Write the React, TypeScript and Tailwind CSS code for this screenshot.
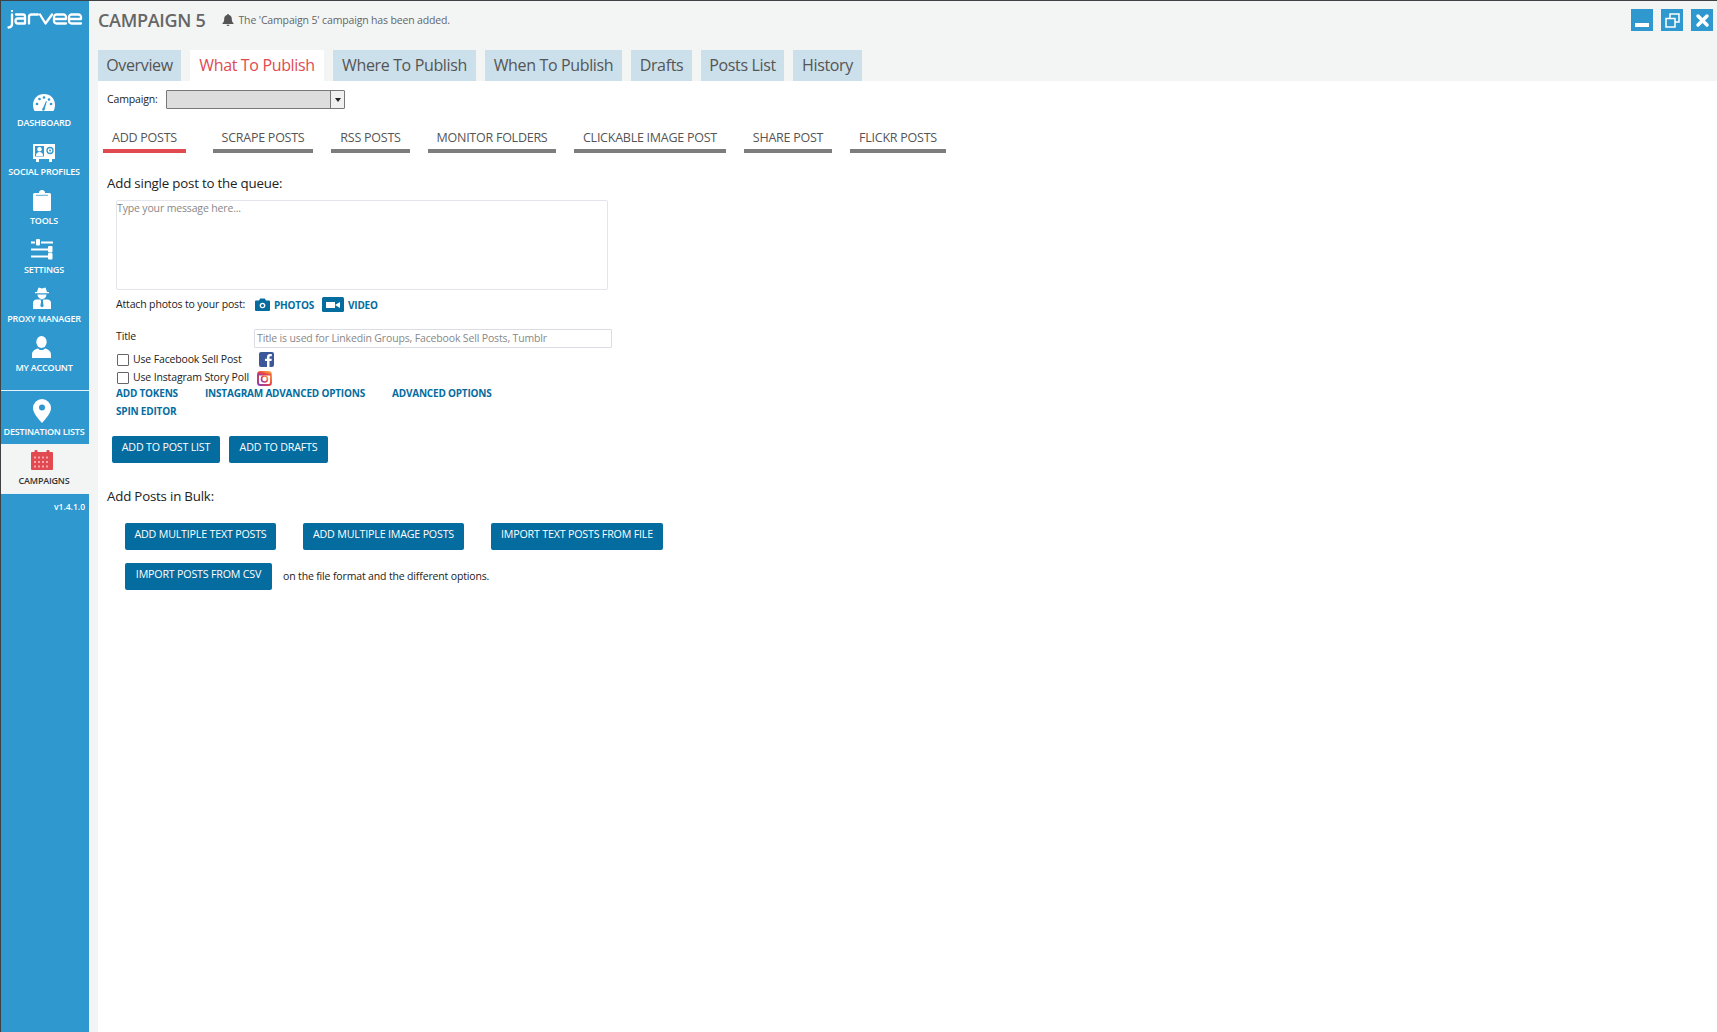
import React from "react";

const font = "font-['Open_Sans','Noto_Sans',sans-serif]";

const E = ({ x }: { x: number }) => (
  <path transform={`translate(${x} 0)`} d="M1 9h12V7a2.500 2.500 0 0 0-2.500-2.500h-7A2.500 2.500 0 0 0 1 7v4a2.500 2.500 0 0 0 2.500 2.500H13" />
);

const Logo = () => (
  <svg width="76" height="19" viewBox="0 0 76 19" fill="none" stroke="white" strokeWidth="2.300" strokeLinecap="round" strokeLinejoin="round">
    <path d="M5 4.500V14c0 2-1 3.300-3.500 3.500" />
    <circle cx="5" cy="0.900" r="0.500" fill="white" strokeWidth="1.200" />
    <path d="M9 4.500h7a2 2 0 0 1 2 2v7h-7a2.500 2.500 0 0 1 0-5h7" />
    <path d="M22 13.500V7a2.500 2.500 0 0 1 2.500-2.500H31" />
    <path d="M33 4.500l5.500 9 6.500-9" />
    <E x={46} />
    <E x={61} />
  </svg>
);

const icons: Record<string, React.ReactNode> = {
  dash: (
    <svg width="24" height="20" viewBox="0 0 24 20" fill="white">
      <path d="M12 1C5.500 1 1 5.800 1 12c0 2.200.6 4.300 1.600 6h18.800c1-1.700 1.600-3.800 1.600-6C23 5.800 18.500 1 12 1z" />
      <g fill="#2f98cf">
        <circle cx="5" cy="11" r="1.300" /><circle cx="7.500" cy="6" r="1.300" /><circle cx="12" cy="4.500" r="1.300" /><circle cx="17" cy="6.500" r="1.300" /><circle cx="19" cy="11" r="1.300" />
        <path d="M11 15l3-7 .8.300-2 7.500a1.400 1.400 0 1 1-1.800-.8z" />
      </g>
    </svg>
  ),
  social: (
    <svg width="24" height="18" viewBox="0 0 24 18" fill="white">
      <path d="M1 0h22v15H1zM4 15h3v3H4zM17 15h3v3h-3z" />
      <rect x="3" y="2" width="9" height="10.500" fill="#2f98cf" />
      <circle cx="7.500" cy="5.200" r="2.200" />
      <path d="M4 12c0-3 1.500-4 3.500-4s3.500 1 3.500 4z" />
      <circle cx="18" cy="6.500" r="3" fill="none" stroke="#2f98cf" strokeWidth="1.300" />
      <circle cx="18" cy="6.500" r="1" fill="#2f98cf" />
    </svg>
  ),
  tools: (
    <svg width="18" height="21" viewBox="0 0 18 21" fill="white">
      <path d="M1.500 3h4.500V1.800L8 0h2l2 1.800V3h4.500A1.500 1.500 0 0 1 18 4.500v15a1.500 1.500 0 0 1-1.500 1.500h-15A1.500 1.500 0 0 1 0 19.500v-15A1.500 1.500 0 0 1 1.500 3z" />
      <path d="M3 5.300h12" stroke="#2f98cf" strokeWidth="0.800" />
    </svg>
  ),
  settings: (
    <svg width="22" height="21" viewBox="0 0 22 21" fill="white">
      <rect x="0" y="2.500" width="4" height="2" /><rect x="5" y="0" width="4" height="6.500" rx="1" /><rect x="10" y="2.500" width="12" height="2" />
      <rect x="0" y="9.500" width="17" height="2" /><rect x="17" y="7" width="4.500" height="6.500" rx="1" />
      <rect x="0" y="16.500" width="17" height="2" /><rect x="17" y="14" width="4.500" height="6.500" rx="1" />
    </svg>
  ),
  proxy: (
    <svg width="18" height="22" viewBox="0 0 18 22" fill="white">
      <path d="M4 5l1.500-4.500L9 1.500l3.500-1L14 5h2v1.300H2V5z" />
      <path d="M4.500 7.500h9a4.500 4.500 0 0 1-9 0z" />
      <path d="M3.500 12.500h11c2 0 3.500 1.500 3.500 3.500v6H0v-6c0-2 1.500-3.500 3.500-3.500z" />
      <path d="M7.500 12.500h3l-.6 2 .8 4.500L9 20.500 7.300 19l.8-4.500z" fill="#2f98cf" />
    </svg>
  ),
  account: (
    <svg width="19" height="22" viewBox="0 0 19 22" fill="white">
      <ellipse cx="9.500" cy="6" rx="5.200" ry="6" />
      <path d="M0 22v-3.500c0-3.500 3-5.500 6-6 1 1 2.200 1.500 3.500 1.500s2.500-.5 3.500-1.500c3 .5 6 2.500 6 6V22z" />
    </svg>
  ),
  pin: (
    <svg width="18" height="24" viewBox="0 0 18 24" fill="white">
      <path d="M9 0a9 9 0 0 1 9 9c0 5-5 10.500-9 15-4-4.500-9-10-9-15a9 9 0 0 1 9-9z" />
      <circle cx="9" cy="8.500" r="3" fill="#2f98cf" />
    </svg>
  ),
  cal: (
    <svg width="22" height="20" viewBox="0 0 22 20" fill="#e04a50">
      <rect x="0" y="2" width="22" height="18" rx="1" />
      <rect x="3.500" y="0" width="3" height="4" rx="1" /><rect x="15.500" y="0" width="3" height="4" rx="1" />
      <g fill="#f3a5a8">
        <rect x="3" y="6.500" width="2" height="2" /><rect x="7" y="6.500" width="2" height="2" /><rect x="11" y="6.500" width="2" height="2" /><rect x="15" y="6.500" width="2" height="2" />
        <rect x="3" y="11" width="2" height="2" /><rect x="7" y="11" width="2" height="2" /><rect x="11" y="11" width="2" height="2" /><rect x="15" y="11" width="2" height="2" />
        <rect x="3" y="15.500" width="2" height="2" /><rect x="7" y="15.500" width="2" height="2" /><rect x="11" y="15.500" width="2" height="2" /><rect x="15" y="15.500" width="2" height="2" />
      </g>
    </svg>
  ),
};

const NavItem = ({ icon, label, pl = "" }: { icon: string; label: string; pl?: string }) => (
  <div className="h-[49px] pr-[2px] flex flex-col items-center justify-end">
    <div className={`h-[26px] flex items-end ${pl}`}>{icons[icon]}</div>
    <div className="mt-[3px] h-[13px] leading-[13px] text-[9px] font-semibold text-white whitespace-nowrap tracking-[-0.2px]">{label}</div>
  </div>
);

const tabs: [string, string][] = [
  ["Overview", "w-[83px]"],
  ["What To Publish", "w-[134px]"],
  ["Where To Publish", "w-[143px]"],
  ["When To Publish", "w-[137px]"],
  ["Drafts", "w-[61px]"],
  ["Posts List", "w-[83px]"],
  ["History", "w-[69px]"],
];

const subTabs: [string, string, string][] = [
  ["ADD POSTS", "w-[83px]", "mr-[9px]"],
  ["SCRAPE POSTS", "w-[100px]", ""],
  ["RSS POSTS", "w-[79px]", ""],
  ["MONITOR FOLDERS", "w-[128px]", ""],
  ["CLICKABLE IMAGE POST", "w-[152px]", ""],
  ["SHARE POST", "w-[88px]", ""],
  ["FLICKR POSTS", "w-[96px]", ""],
];

const Btn = ({ children, w }: { children: React.ReactNode; w: string }) => (
  <button className={`${w} h-[27px] pb-[4px] bg-[#056c9f] rounded-[2px] text-white text-[10.700px] tracking-[-0.2px] whitespace-nowrap`}>{children}</button>
);

const LinkText = ({ children }: { children: React.ReactNode }) => (
  <span className="block leading-[14px] text-[#056c9f] text-[10px] font-bold whitespace-nowrap tracking-[-0.2px]">{children}</span>
);

const Check = () => <span className="w-[12px] h-[12px] border border-[#666] rounded-[1px] bg-white shrink-0" />;

export default function App() {
  return (
    <div className={`${font} w-[1717px] h-[1032px] flex flex-col overflow-hidden bg-white text-[#222] border-t border-[#3f4244]`}>
      <div className="flex-1 flex min-h-0">
        <aside className="w-[89px] shrink-0 bg-[#2f98cf] border-l border-[#3f4244] flex flex-col">
          <div className="h-[37px] pl-[6px] pt-[9px]"><Logo /></div>
          <div className="pt-[42px]">
            <NavItem icon="dash" label="DASHBOARD" />
            <NavItem icon="social" label="SOCIAL PROFILES" />
            <NavItem icon="tools" label="TOOLS" pl="pr-[5px]" />
            <NavItem icon="settings" label="SETTINGS" pl="pr-[5px]" />
            <NavItem icon="proxy" label="PROXY MANAGER" pl="pr-[5px]" />
            <NavItem icon="account" label="MY ACCOUNT" pl="pr-[5px]" />
          </div>
          <div className="h-[17px] border-b border-[#e8f3f9]" />
          <div className="h-[53px] pr-[2px] flex flex-col items-center justify-end pb-[6px]">
            <div className="pr-[5px]">{icons.pin}</div>
            <div className="mt-[2px] h-[13px] leading-[13px] text-[9px] font-semibold text-white whitespace-nowrap tracking-[-0.2px]">DESTINATION LISTS</div>
          </div>
          <div className="h-[50px] pr-[2px] bg-[#f3f5f5] flex flex-col items-center justify-end pb-[6px] border-b border-[#e8f3f9]">
            <div className="pr-[5px]">{icons.cal}</div>
            <div className="mt-[4px] h-[13px] leading-[13px] text-[9px] font-semibold text-[#333] whitespace-nowrap tracking-[-0.2px]">CAMPAIGNS</div>
          </div>
          <div className="pt-[6px] pr-[4px] text-right text-[8.500px] font-semibold leading-[13px] text-white">v1.4.1.0</div>
        </aside>

        <div className="flex-1 flex flex-col min-w-0 bg-[#f3f5f5]">
          <header className="h-[80px] shrink-0 flex flex-col">
            <div className="h-[49px] flex pl-[9px] pr-[4px]">
              <div className="flex items-start pt-[7px]">
                <span className="text-[18px] leading-[24px] text-[#666] font-semibold whitespace-nowrap tracking-[-0.3px]">CAMPAIGN 5</span>
                <span className="ml-[17px] mt-[5px] flex items-center gap-[4px]">
                  <svg width="12" height="12" viewBox="0 0 12 12" fill="#555"><path d="M6 0a1 1 0 0 1 1 1c2 .5 2.800 2 2.800 4 0 2.500.7 3.300 1.700 4.300v.7H.5v-.7C1.500 8.300 2.200 7.500 2.200 5c0-2 .8-3.500 2.800-4a1 1 0 0 1 1-1zM4.500 10.700h3a1.500 1.300 0 0 1-3 0z" /></svg>
                  <span className="text-[10.500px] leading-[14px] text-[#666] whitespace-nowrap tracking-[-0.15px]">The 'Campaign 5' campaign has been added.</span>
                </span>
              </div>
              <div className="ml-auto flex gap-[8px] pt-[8px]">
                <span className="w-[22px] h-[22px] bg-[#2f98cf] flex items-end justify-center pb-[4px]"><span className="w-[14px] h-[4px] bg-white" /></span>
                <span className="w-[22px] h-[22px] bg-[#2f98cf] flex items-center justify-center">
                  <svg width="15" height="15" viewBox="0 0 15 15" fill="none" stroke="white" strokeWidth="1.500"><rect x="5" y="1" width="9" height="8" /><rect x="1" y="5.500" width="9" height="8.500" fill="#2f98cf" /></svg>
                </span>
                <span className="w-[22px] h-[22px] bg-[#2f98cf] flex items-center justify-center">
                  <svg width="15" height="15" viewBox="0 0 15 15" stroke="white" strokeWidth="3.500" strokeLinecap="round"><path d="M3 3l9 9M12 3l-9 9" /></svg>
                </span>
              </div>
            </div>
            <nav className="h-[31px] flex gap-[9px] pl-[9px]">
              {tabs.map(([t, w]) => (
                <div key={t} className={`${w} h-[31px] pb-[2px] flex items-center justify-center text-[16px] whitespace-nowrap tracking-[-0.35px] ${t === "What To Publish" ? "bg-white text-[#e04a50]" : "bg-[#cbe0eb] text-[#555]"}`}>{t}</div>
              ))}
            </nav>
          </header>

          <main className="flex-1 ml-[9px] bg-white">
            <div className="h-[37px] flex items-center pl-[9px]">
              <span className="text-[10.500px] tracking-[-0.15px] w-[59px]">Campaign:</span>
              <div className="w-[179px] h-[19px] border border-[#777] rounded-[1px] bg-[#dddddd] flex justify-end">
                <span className="w-[14px] h-full bg-[#f0f0f0] border-l border-[#777] flex items-center justify-center">
                  <span className="border-x-[3.500px] border-x-transparent border-t-[4px] border-t-[#222]" />
                </span>
              </div>
            </div>

            <div className="flex gap-[18px] pl-[5px] pt-[11px]">
              {subTabs.map(([t, w, m]) => (
                <div key={t} className={`${w} ${m} h-[24px] border-b-[4px] text-center text-[12.500px] leading-[17px] whitespace-nowrap tracking-[-0.25px] text-[#555] ${t === "ADD POSTS" ? "border-[#e04a50]" : "border-[#7d7d7d]"}`}>{t}</div>
              ))}
            </div>

            <div className="pl-[9px] pt-[21px] h-[47px] text-[13.300px] leading-[18px] tracking-[-0.2px]">Add single post to the queue:</div>

            <div className="pl-[18px]">
              <textarea readOnly placeholder="Type your message here..." className="block w-[492px] h-[90px] resize-none border border-[#e3e5ea] rounded-[2px] px-0 py-0 text-[10.500px] leading-[14px] tracking-[-0.15px] placeholder:text-[#888] outline-none" />

              <div className="h-[30px] flex items-center text-[10.500px] tracking-[-0.15px] pb-[1px]">
                <span className="w-[139px] whitespace-nowrap">Attach photos to your post:</span>
                <svg width="15" height="13" viewBox="0 0 15 13" fill="#056c9f"><path d="M1 2.500h3l1.200-2h4.600l1.200 2h3a1 1 0 0 1 1 1V12a1 1 0 0 1-1 1H1a1 1 0 0 1-1-1V3.500a1 1 0 0 1 1-1z" /><circle cx="7.500" cy="7.500" r="2.800" fill="white" /><circle cx="7.500" cy="7.500" r="1.500" /></svg>
                <span className="ml-[4px] w-[48px]"><LinkText>PHOTOS</LinkText></span>
                <svg width="22" height="15" viewBox="0 0 22 15"><rect width="22" height="15" rx="1.500" fill="#056c9f" /><rect x="4" y="5" width="9" height="6" fill="white" /><path d="M13 8l5-3v6z" fill="white" /></svg>
                <span className="ml-[4px]"><LinkText>VIDEO</LinkText></span>
              </div>

              <div className="h-[30px] flex items-start pt-[9px]">
                <span className="w-[138px] text-[10.500px] leading-[14px] tracking-[-0.15px]">Title</span>
                <div className="w-[358px] h-[19px] border border-[#dcdce4] rounded-[1px] px-[2px] text-[10.500px] leading-[17px] tracking-[-0.15px] text-[#888] whitespace-nowrap overflow-hidden">Title is used for Linkedin Groups, Facebook Sell Posts, Tumblr</div>
              </div>

              <div className="h-[19px] flex items-center pl-[1px]">
                <Check />
                <span className="ml-[4px] w-[126px] text-[10.500px] tracking-[-0.15px] whitespace-nowrap">Use Facebook Sell Post</span>
                <svg width="15" height="15" viewBox="0 0 15 15"><rect width="15" height="15" rx="2" fill="#3b5998" /><path d="M10.500 15V9h2l.3-2.300h-2.300V5.300c0-.7.200-1.100 1.100-1.100h1.200V2.100c-.3 0-1-.1-1.800-.1-1.800 0-3 1.100-3 3.100v1.600h-2V9h2v6z" fill="white" /></svg>
              </div>
              <div className="h-[18px] flex items-center pl-[1px]">
                <Check />
                <span className="ml-[4px] w-[124px] text-[10.500px] tracking-[-0.15px] whitespace-nowrap">Use Instagram Story Poll</span>
                <svg width="15" height="15" viewBox="0 0 15 15" fill="none">
                  <defs><linearGradient id="ig" x1="0" y1="1" x2="1" y2="0"><stop offset="0" stopColor="#8a3ab9" /><stop offset="0.5" stopColor="#e9413f" /><stop offset="1" stopColor="#fcaf45" /></linearGradient></defs>
                  <rect x="1" y="1" width="13" height="13" rx="2.500" stroke="url(#ig)" strokeWidth="2" fill="white" />
                  <rect x="1" y="1" width="13" height="3.500" fill="url(#ig)" />
                  <circle cx="7.500" cy="8" r="3" stroke="url(#ig)" strokeWidth="1.600" />
                </svg>
              </div>
              <div className="h-[14px] -mt-[1px] flex items-center">
                <span className="w-[89px]"><LinkText>ADD TOKENS</LinkText></span>
                <span className="w-[187px]"><LinkText>INSTAGRAM ADVANCED OPTIONS</LinkText></span>
                <LinkText>ADVANCED OPTIONS</LinkText>
              </div>
              <div className="h-[18px] mt-[2px] flex items-center"><LinkText>SPIN EDITOR</LinkText></div>
            </div>

            <div className="flex gap-[9px] pl-[14px] mt-[16px]">
              <Btn w="w-[108px]">ADD TO POST LIST</Btn>
              <Btn w="w-[99px]">ADD TO DRAFTS</Btn>
            </div>

            <div className="pl-[9px] pt-[24px] h-[60px] text-[13.300px] leading-[18px] tracking-[-0.2px]">Add Posts in Bulk:</div>

            <div className="pl-[27px]">
              <div className="flex gap-[27px]">
                <Btn w="w-[151px]">ADD MULTIPLE TEXT POSTS</Btn>
                <Btn w="w-[161px]">ADD MULTIPLE IMAGE POSTS</Btn>
                <Btn w="w-[172px]">IMPORT TEXT POSTS FROM FILE</Btn>
              </div>
              <div className="flex items-center mt-[13px]">
                <Btn w="w-[147px]">IMPORT POSTS FROM CSV</Btn>
                <span className="ml-[11px] text-[10.500px] tracking-[-0.15px] whitespace-nowrap">on the file format and the different options.</span>
              </div>
            </div>
          </main>
        </div>
      </div>
    </div>
  );
}
